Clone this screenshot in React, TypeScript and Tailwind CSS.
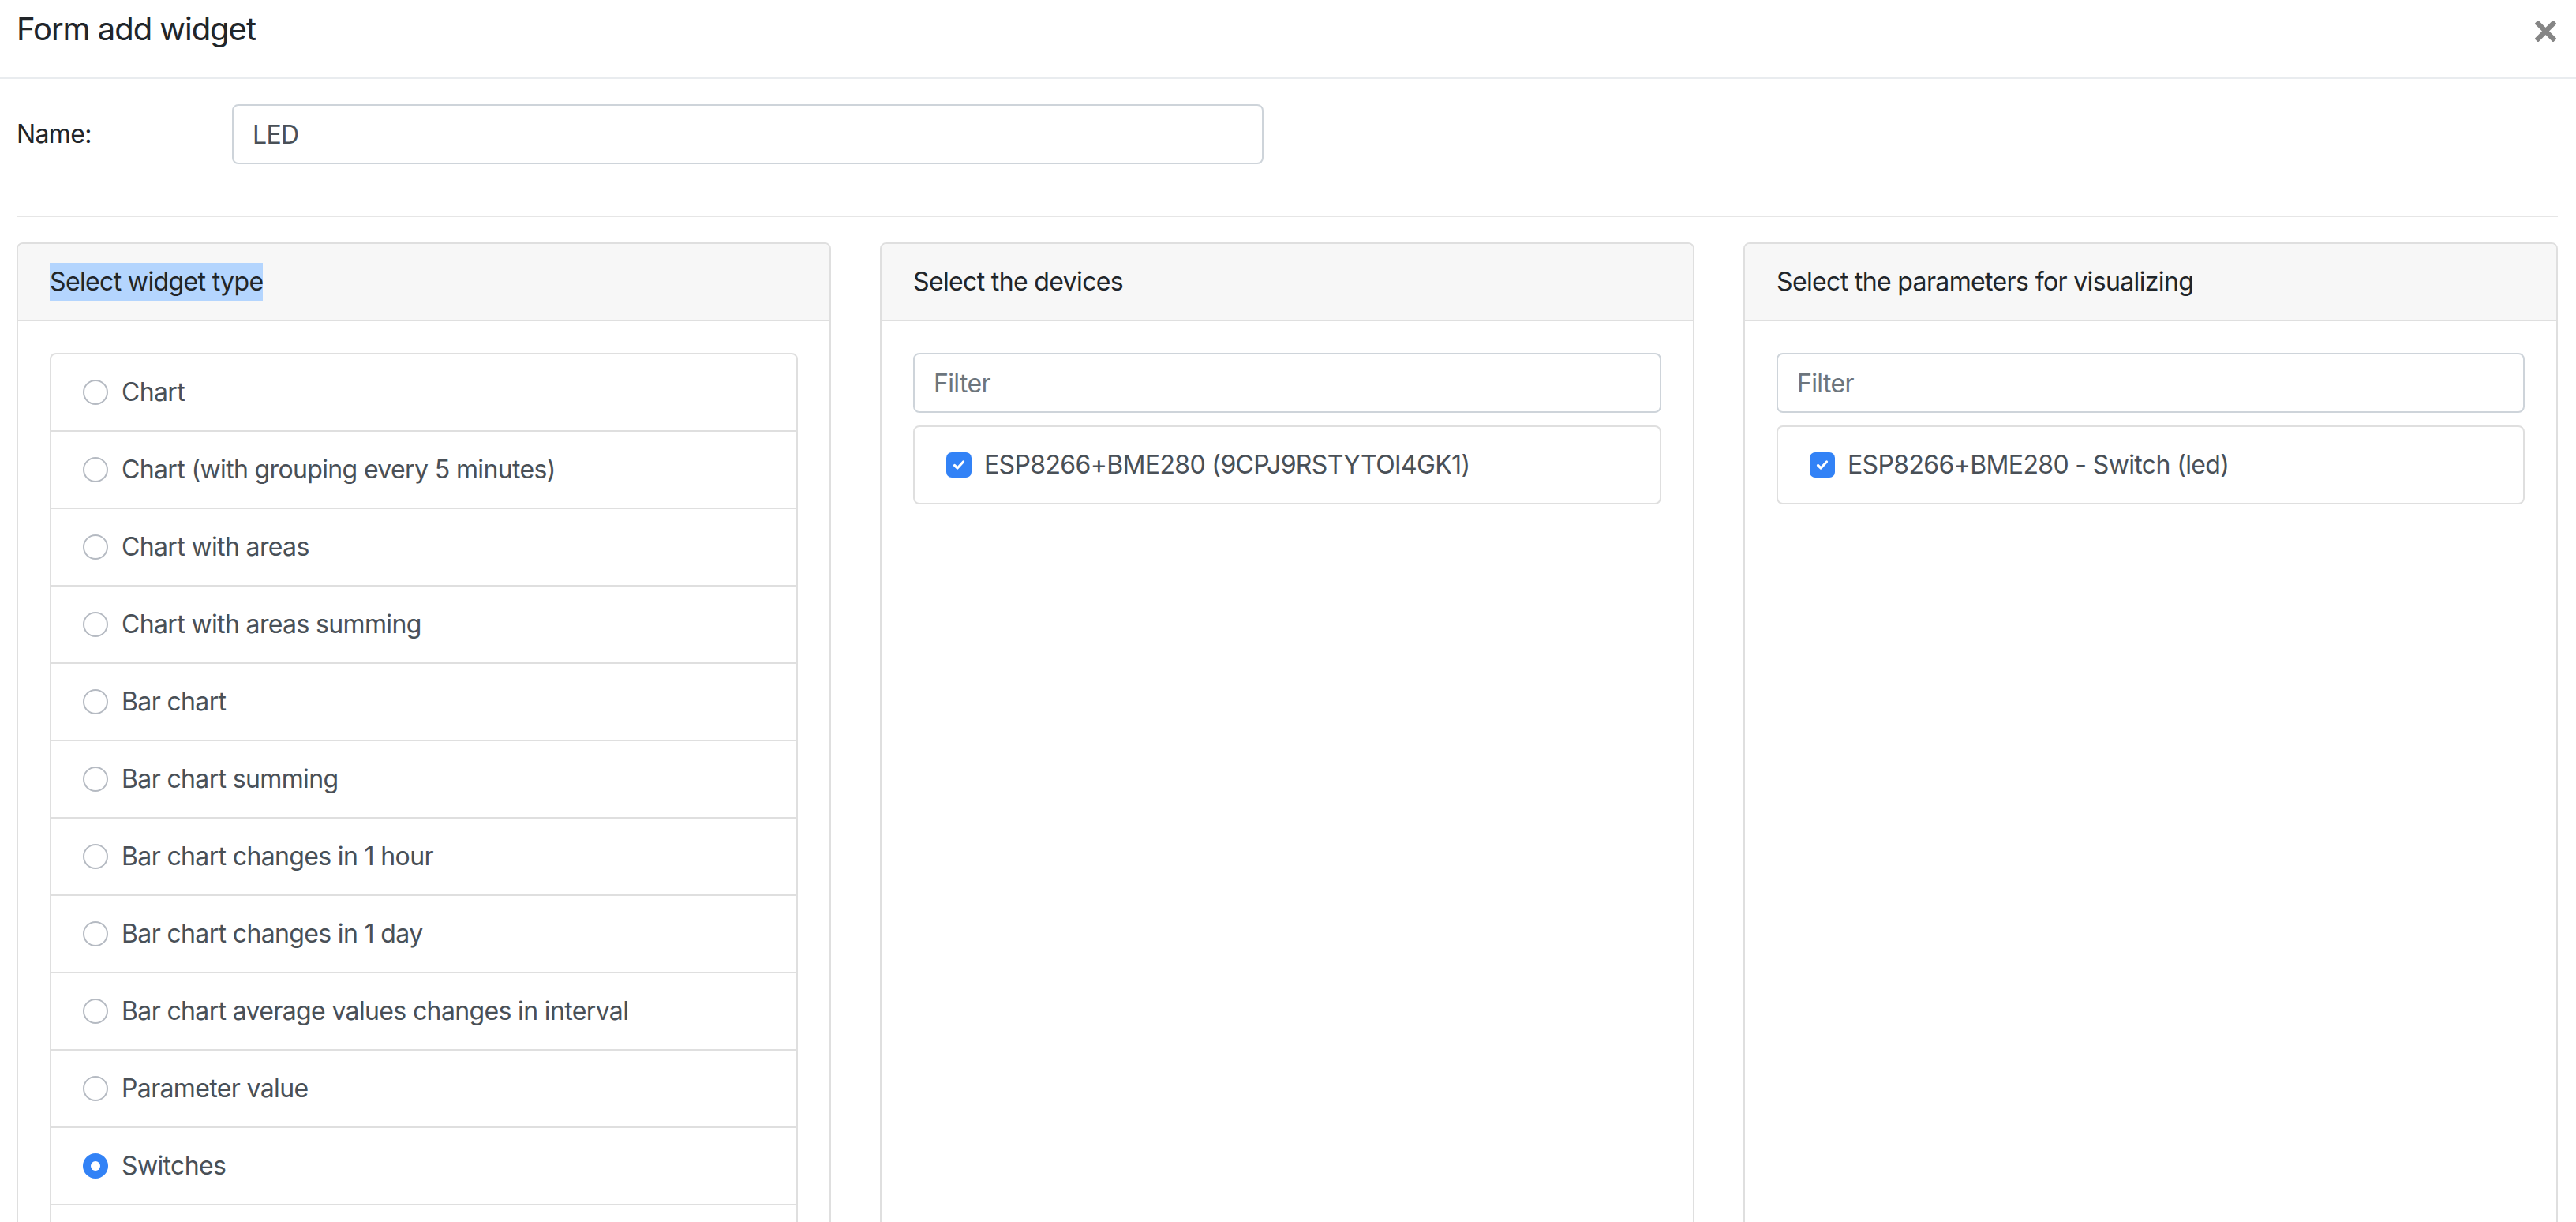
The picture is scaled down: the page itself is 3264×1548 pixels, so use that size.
import React, { useState } from 'react';

const widgetTypes = [
  'Chart',
  'Chart (with grouping every 5 minutes)',
  'Chart with areas',
  'Chart with areas summing',
  'Bar chart',
  'Bar chart summing',
  'Bar chart changes in 1 hour',
  'Bar chart changes in 1 day',
  'Bar chart average values changes in interval',
  'Parameter value',
  'Switches',
  'Text',
];

const Radio: React.FC<{ checked: boolean }> = ({ checked }) =>
  checked ? (
    <span className="flex h-[32px] w-[32px] shrink-0 items-center justify-center rounded-full bg-[#3282f6]">
      <span className="h-[12px] w-[12px] rounded-full bg-white" />
    </span>
  ) : (
    <span className="h-[32px] w-[32px] shrink-0 rounded-full border-2 border-[#b5bac2] bg-white" />
  );

const Checkbox: React.FC = () => (
  <span className="flex h-[32px] w-[32px] shrink-0 items-center justify-center rounded-[7px] bg-[#3282f6]">
    <svg width="18" height="18" viewBox="0 0 18 18" fill="none">
      <path d="M3.5 9.5 L7.2 13 L14.5 5" stroke="white" strokeWidth="3.2" strokeLinecap="round" strokeLinejoin="round" />
    </svg>
  </span>
);

const Card: React.FC<{ title: React.ReactNode; children: React.ReactNode }> = ({ title, children }) => (
  <div className="flex flex-col rounded-[8px] border-2 border-[#dfdfdf] bg-white">
    <div className="flex h-[98px] items-center rounded-t-[6px] border-b-2 border-[#dfdfdf] bg-[#f7f7f7] px-[40px] text-[#212529]">
      {title}
    </div>
    <div className="flex-1 p-[40px]">{children}</div>
  </div>
);

const FilterInput: React.FC = () => (
  <input
    placeholder="Filter"
    className="mb-[16px] h-[76px] w-full rounded-[8px] border-2 border-[#ced4da] px-[24px] text-[32px] tracking-[-0.02em] text-[#495057] outline-none placeholder:text-[#6c757d]"
  />
);

const CheckRow: React.FC<{ label: string }> = ({ label }) => (
  <div className="rounded-[8px] border-2 border-[#dfdfdf]">
    <div className="flex h-[96px] items-center gap-[16px] px-[40px] text-[#495057]">
      <Checkbox />
      <span>{label}</span>
    </div>
  </div>
);

export default function App() {
  const [selected, setSelected] = useState('Switches');

  return (
    <div
      className="min-h-screen bg-white text-[32px] leading-[48px] tracking-[-0.02em] text-[#212529]"
      style={{ fontFamily: 'Inter, "Noto Sans", Roboto, sans-serif' }}
    >
      {/* Modal header */}
      <div className="flex h-[100px] items-start justify-between border-b-2 border-[#e9ecef] pl-[21px] pr-[25px] pt-[7px]">
        <h5 className="text-[40px] leading-[60px] font-normal tracking-[-0.026em]">Form add widget</h5>
        <button className="mt-[19px] text-[#858585]" aria-label="Close">
          <svg width="27" height="27" viewBox="0 0 27 27">
            <path d="M4 4 L23 23 M23 4 L4 23" stroke="currentColor" strokeWidth="6.5" strokeLinecap="square" />
          </svg>
        </button>
      </div>

      <div className="pl-[21px] pr-[23px]">
        {/* Name row */}
        <div className="flex items-center pt-[32px]">
          <label className="w-[273px]">Name:</label>
          <input
            defaultValue="LED"
            className="h-[76px] w-[1307px] rounded-[8px] border-2 border-[#ced4da] px-[24px] text-[32px] tracking-[-0.02em] text-[#495057] outline-none"
          />
        </div>

        <div className="mt-[65px] h-[2px] bg-[#e6e6e6]" />

        {/* Columns */}
        <div className="mt-[32px] grid grid-cols-3 gap-[62px]">
          <Card title={<span className="bg-[#b4d5fe]">Select widget type</span>}>
            <div className="rounded-[8px] border-2 border-[#dfdfdf]">
              {widgetTypes.map((t, i) => (
                <div
                  key={t}
                  onClick={() => setSelected(t)}
                  className={`flex h-[96px] cursor-pointer items-center gap-[17px] px-[40px] text-[#495057] ${
                    i > 0 ? 'box-content border-t-2 border-[#dfdfdf]' : ''
                  }`}
                >
                  <Radio checked={selected === t} />
                  <span>{t}</span>
                </div>
              ))}
            </div>
          </Card>

          <Card title="Select the devices">
            <FilterInput />
            <CheckRow label="ESP8266+BME280 (9CPJ9RSTYTOI4GK1)" />
          </Card>

          <Card title="Select the parameters for visualizing">
            <FilterInput />
            <CheckRow label="ESP8266+BME280 - Switch (led)" />
          </Card>
        </div>
      </div>
    </div>
  );
}
